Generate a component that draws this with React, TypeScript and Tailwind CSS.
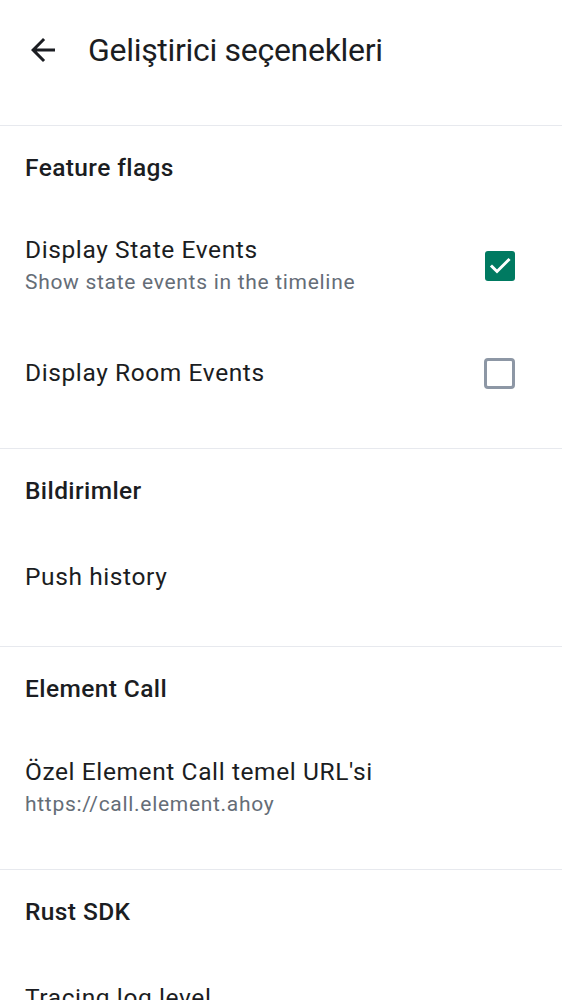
import React from "react";

const font = { fontFamily: "Roboto, 'Noto Sans', sans-serif" };

function BackIcon() {
  return (
    <svg viewBox="0 0 24 24" className="h-9 w-9 text-[#1b1d22]" fill="currentColor" aria-hidden>
      <path d="M20 11H7.83l5.59-5.59L12 4l-8 8 8 8 1.41-1.41L7.83 13H20v-2z" />
    </svg>
  );
}

function Checkbox({ checked }: { checked: boolean }) {
  if (checked) {
    return (
      <div className="flex h-[30px] w-[30px] items-center justify-center rounded-[3px] bg-[#007a61]">
        <svg viewBox="0 0 30 30" className="h-[30px] w-[30px]" fill="none" stroke="white" strokeWidth={3} strokeLinecap="square">
          <path d="M7 15.5l5 5L23.5 9" />
        </svg>
      </div>
    );
  }
  return <div className="h-[31px] w-[31px] rounded-[4px] border-[3px] border-[#8d97a5]" />;
}

function SectionTitle({ children }: { children: React.ReactNode }) {
  return (
    <div className="flex h-[84px] items-center px-[25px] text-[24.5px] font-medium tracking-[0.4px] text-[#1b1d22]">
      {children}
    </div>
  );
}

function Item({
  title,
  subtitle,
  checked,
  height,
}: {
  title: string;
  subtitle?: string;
  checked?: boolean;
  height: string;
}) {
  return (
    <div className={`flex items-center px-[25px] ${height}`}>
      <div className="flex min-w-0 flex-1 flex-col">
        <div className="text-[24.5px] leading-[32px] tracking-[0.6px] text-[#1b1d22]">{title}</div>
        {subtitle && <div className="text-[21px] leading-[32px] tracking-[0.7px] text-[#656d77]">{subtitle}</div>}
      </div>
      {checked !== undefined && (
        <div className="mr-[22px] flex w-[31px] justify-center">
          <Checkbox checked={checked} />
        </div>
      )}
    </div>
  );
}

export default function App() {
  return (
    <div className="h-[1000px] w-full overflow-hidden bg-white" style={font}>
      <div className="flex h-[100px] items-center pl-[25px]">
        <BackIcon />
        <div className="ml-[27px] text-[32px] tracking-[-0.3px] text-[#1b1d22]">Geliştirici seçenekleri</div>
      </div>
      <div className="h-[25px]" />

      <section className="border-t border-[#e7e9ee] pb-6">
        <SectionTitle>Feature flags</SectionTitle>
        <Item title="Display State Events" subtitle="Show state events in the timeline" checked height="h-[112px]" />
        <Item title="Display Room Events" checked={false} height="h-[102px]" />
      </section>

      <section className="border-t border-[#e7e9ee] pb-[25px]">
        <SectionTitle>Bildirimler</SectionTitle>
        <Item title="Push history" height="h-[88px]" />
      </section>

      <section className="border-t border-[#e7e9ee] pb-6">
        <SectionTitle>Element Call</SectionTitle>
        <Item title="Özel Element Call temel URL'si" subtitle="https://call.element.ahoy" height="h-[114px]" />
      </section>

      <section className="border-t border-[#e7e9ee]">
        <SectionTitle>Rust SDK</SectionTitle>
        <Item title="Tracing log level" height="h-[88px]" />
      </section>
    </div>
  );
}
